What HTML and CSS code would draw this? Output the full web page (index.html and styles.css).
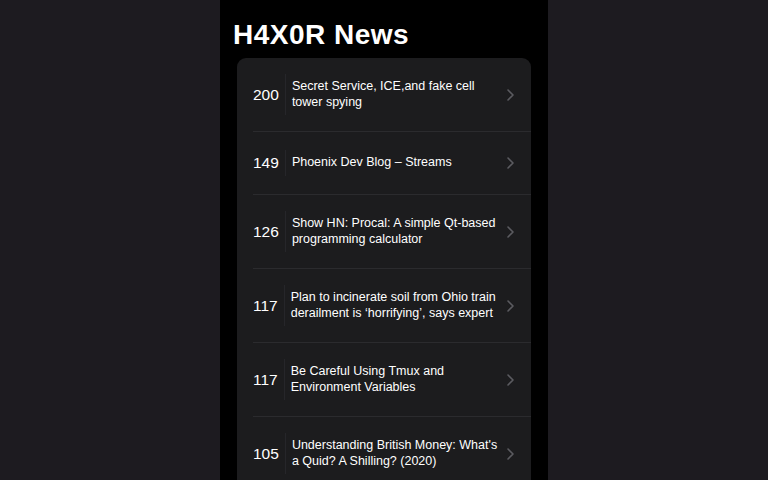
FILE: index.html
```html
<!DOCTYPE html>
<html>
<head>
<meta charset="utf-8">
<link rel="stylesheet" href="styles.css">
</head>
<body>
<div class="screen">
  <h1 class="title">H4X0R News</h1>
  <div class="card">
    <div class="row"><div class="inner"><span class="score">200</span><span class="text">Secret Service, ICE,and fake cell tower spying</span><span class="chev"><svg width="7" height="12" viewBox="0 0 7 12"><path d="M1 1l5 5-5 5" fill="none" stroke="#5b5b60" stroke-width="1.6" stroke-linecap="round" stroke-linejoin="round"/></svg></span></div></div>
    <div class="row"><div class="inner"><span class="score">149</span><span class="text">Phoenix Dev Blog – Streams</span><span class="chev"><svg width="7" height="12" viewBox="0 0 7 12"><path d="M1 1l5 5-5 5" fill="none" stroke="#5b5b60" stroke-width="1.6" stroke-linecap="round" stroke-linejoin="round"/></svg></span></div></div>
    <div class="row"><div class="inner"><span class="score">126</span><span class="text">Show HN: Procal: A simple Qt-based programming calculator</span><span class="chev"><svg width="7" height="12" viewBox="0 0 7 12"><path d="M1 1l5 5-5 5" fill="none" stroke="#5b5b60" stroke-width="1.6" stroke-linecap="round" stroke-linejoin="round"/></svg></span></div></div>
    <div class="row"><div class="inner"><span class="score">117</span><span class="text">Plan to incinerate soil from Ohio train derailment is ‘horrifying’, says expert</span><span class="chev"><svg width="7" height="12" viewBox="0 0 7 12"><path d="M1 1l5 5-5 5" fill="none" stroke="#5b5b60" stroke-width="1.6" stroke-linecap="round" stroke-linejoin="round"/></svg></span></div></div>
    <div class="row"><div class="inner"><span class="score">117</span><span class="text">Be Careful Using Tmux and Environment Variables</span><span class="chev"><svg width="7" height="12" viewBox="0 0 7 12"><path d="M1 1l5 5-5 5" fill="none" stroke="#5b5b60" stroke-width="1.6" stroke-linecap="round" stroke-linejoin="round"/></svg></span></div></div>
    <div class="row"><div class="inner"><span class="score">105</span><span class="text">Understanding British Money: What's a Quid? A Shilling? (2020)</span><span class="chev"><svg width="7" height="12" viewBox="0 0 7 12"><path d="M1 1l5 5-5 5" fill="none" stroke="#5b5b60" stroke-width="1.6" stroke-linecap="round" stroke-linejoin="round"/></svg></span></div></div>
  </div>
</div>
</body>
</html>
```
FILE: styles.css
```css
html, body {
  margin: 0;
  height: 100%;
  background: #1d1b20;
  overflow: hidden;
}
body {
  display: flex;
  justify-content: center;
  font-family: "Liberation Sans", Arial, sans-serif;
  color: #fff;
}
.screen {
  width: 328px;
  height: 480px;
  background: #000;
  box-sizing: border-box;
  padding: 0 17px;
  overflow: hidden;
}
.title {
  margin: 18px 0 6px -4px;
  font-size: 28px;
  line-height: 34px;
  font-weight: bold;
  letter-spacing: 0.5px;
}
.card {
  background: #1c1c1e;
  border-radius: 9px;
}
.row {
  padding-left: 16px;
}
.inner {
  display: flex;
  align-items: center;
  min-height: 63px;
  box-sizing: border-box;
  padding: 16px 17px 16px 0;
  border-bottom: 1px solid #2b2b2e;
}
.row:last-child .inner {
  border-bottom: none;
}
.score {
  font-size: 15.5px;
  padding-right: 6px;
}
.text {
  flex: 1;
  font-size: 12.5px;
  line-height: 15.5px;
  padding: 5px 0 5px 6px;
  border-left: 1px solid #26262a;
}
.chev {
  display: flex;
  margin-left: 8px;
}
```
